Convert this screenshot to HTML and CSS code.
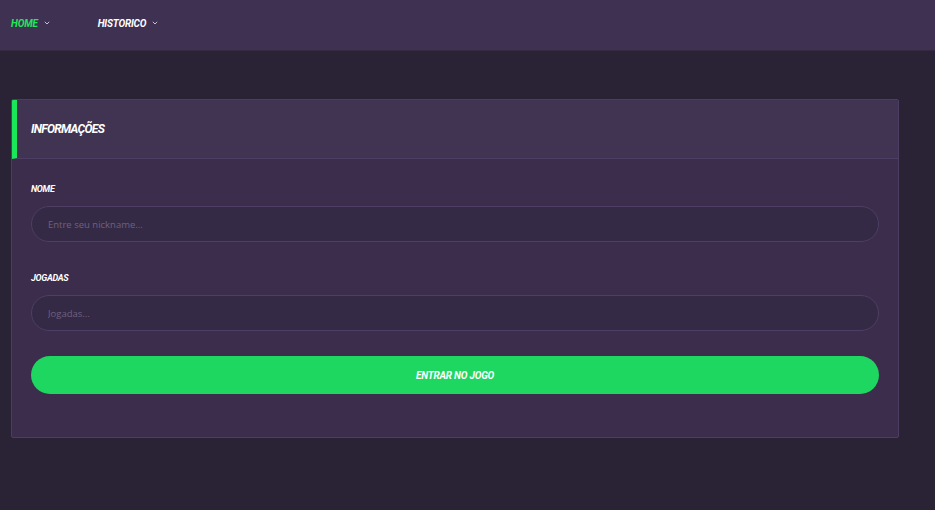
FILE: index.html
```html
<!DOCTYPE html>
<html lang="pt">
<head>
<meta charset="utf-8">
<link rel="stylesheet" href="styles.css">
</head>
<body>
<nav class="nav">
  <a class="nav-item active">HOME <svg class="chev" viewBox="0 0 6 4" width="6" height="4"><path d="M0.8 0.8 L3 3 L5.2 0.8" fill="none" stroke="currentColor" stroke-width="1"/></svg></a>
  <a class="nav-item">HISTORICO <svg class="chev" viewBox="0 0 6 4" width="6" height="4"><path d="M0.8 0.8 L3 3 L5.2 0.8" fill="none" stroke="currentColor" stroke-width="1"/></svg></a>
</nav>
<main class="main">
  <section class="card">
    <header class="card-head"><h2>INFORMAÇÕES</h2></header>
    <div class="card-body">
      <label class="label">NOME</label>
      <input class="input" type="text" placeholder="Entre seu nickname...">
      <label class="label">JOGADAS</label>
      <input class="input" type="text" placeholder="Jogadas...">
      <button class="btn">ENTRAR NO JOGO</button>
    </div>
  </section>
</main>
</body>
</html>
```

FILE: styles.css
```css
* { box-sizing: border-box; }
html, body { margin: 0; padding: 0; }
body {
  background: #2a2235;
  font-family: Roboto, "Liberation Sans", sans-serif;
  width: 935px;
  height: 510px;
  overflow: hidden;
}
.nav {
  height: 51px;
  background: #3f3152;
  border-bottom: 1px solid #36293f;
  display: flex;
  align-items: center;
  padding: 0 0 4px 11px;
}
.nav-item {
  color: #ffffff;
  font-weight: 700;
  font-style: italic;
  font-size: 10px;
  letter-spacing: -0.2px;
  display: flex;
  align-items: center;
  gap: 5px;
  margin-right: 48px;
}
.nav-item.active { color: #1ee85b; }
.nav-item .chev { color: #c8c0d4; margin-left: 1px; }
.main { padding: 48px 36px 0 11px; }
.card {
  border: 1px solid #4c3e62;
  border-radius: 2px;
  background: #3b2d4b;
  overflow: hidden;
}
.card-head {
  height: 59px;
  background: #413352;
  border-bottom: 1px solid #4c3e62;
  border-left: 5px solid #19e85a;
  display: flex;
  align-items: center;
  padding-left: 14px;
}
.card-head h2 {
  margin: 0;
  color: #ffffff;
  font-size: 12px;
  font-weight: 700;
  font-style: italic;
  letter-spacing: -0.7px;
}
.card-body {
  padding: 25px 19px 43px 19px;
  display: flex;
  flex-direction: column;
}
.label {
  color: #ffffff;
  font-size: 9px;
  font-weight: 700;
  font-style: italic;
  letter-spacing: -0.3px;
  height: 10px;
  line-height: 10px;
  margin-bottom: 12px;
}
.input {
  height: 36px;
  border-radius: 18px;
  border: 1px solid #4d3f63;
  background: #352a45;
  padding: 0 16px;
  font-family: "Open Sans", sans-serif;
  font-size: 9.5px;
  color: #ddd;
  outline: none;
  margin-bottom: 31px;
}
.input::placeholder { color: #6e6081; }
.btn {
  margin-top: -6px;
  height: 38px;
  border: 0;
  border-radius: 19px;
  background: #1ed760;
  color: #ffffff;
  font-family: Roboto, sans-serif;
  font-size: 10px;
  font-weight: 700;
  font-style: italic;
  letter-spacing: -0.2px;
}
```
